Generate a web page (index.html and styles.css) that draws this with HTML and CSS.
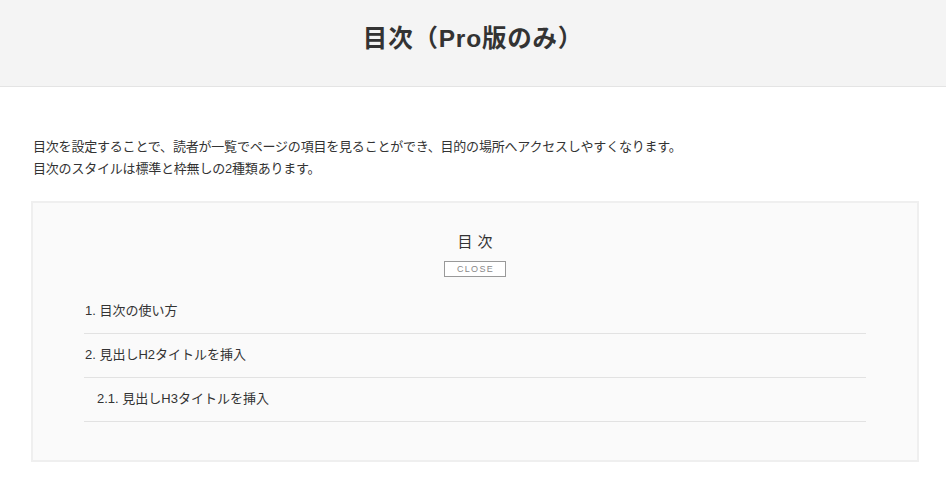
FILE: index.html
```html
<!DOCTYPE html>
<html lang="ja">
<head>
<meta charset="utf-8">
<link rel="stylesheet" href="styles.css">
</head>
<body>
<header class="page-header">
  <h1 class="page-title">目次（Pro版のみ）</h1>
</header>
<main class="content">
  <p class="lead">目次を設定することで、読者が一覧でページの項目を見ることができ、目的の場所へアクセスしやすくなります。<br>目次のスタイルは標準と枠無しの2種類あります。</p>
  <div class="toc">
    <div class="toc-title">目次</div>
    <div class="toc-toggle"><span class="toc-btn">CLOSE</span></div>
    <ul class="toc-list">
      <li class="toc-item">1. 目次の使い方</li>
      <li class="toc-item">2. 見出しH2タイトルを挿入</li>
      <li class="toc-item toc-sub">2.1. 見出しH3タイトルを挿入</li>
    </ul>
  </div>
</main>
</body>
</html>
```
FILE: styles.css
```css
* { box-sizing: border-box; }
body {
  margin: 0;
  background: #fff;
  color: #333;
  font-family: "Liberation Sans", "Noto Sans CJK JP", sans-serif;
}
.page-header {
  height: 87px;
  background: #f4f4f4;
  border-bottom: 1px solid #e4e4e4;
  display: flex;
  align-items: center;
  justify-content: center;
  padding-bottom: 14px;
}
.page-title {
  margin: 0;
  font-size: 24.5px;
  font-weight: bold;
  color: #333;
  letter-spacing: 0.8px;
}
.content {
  padding: 49px 27px 0 31px;
}
.lead {
  margin: 0 0 0 2px;
  font-size: 13px;
  line-height: 22px;
  letter-spacing: -0.2px;
  color: #333;
}
.toc {
  margin-top: 21px;
  background: #fafafa;
  border: 2px solid #efefef;
  padding: 27px 51px 38px;
}
.toc-title {
  text-align: center;
  font-size: 15px;
  line-height: 24px;
  letter-spacing: 5px;
  padding-left: 5px;
  color: #333;
}
.toc-toggle {
  display: flex;
  justify-content: center;
  margin-top: 7px;
}
.toc-btn {
  display: block;
  width: 62px;
  height: 16px;
  border: 1px solid #999;
  font-size: 9px;
  line-height: 14px;
  letter-spacing: 1.3px;
  padding-left: 1px;
  text-align: center;
  color: #888;
  background: #fff;
}
.toc-list {
  list-style: none;
  margin: 13px 0 0;
  padding: 0;
}
.toc-item {
  height: 44px;
  line-height: 41px;
  border-bottom: 1px solid #e2e2e2;
  font-size: 13px;
  padding-left: 1px;
  color: #333;
}
.toc-sub {
  padding-left: 13px;
}
```
